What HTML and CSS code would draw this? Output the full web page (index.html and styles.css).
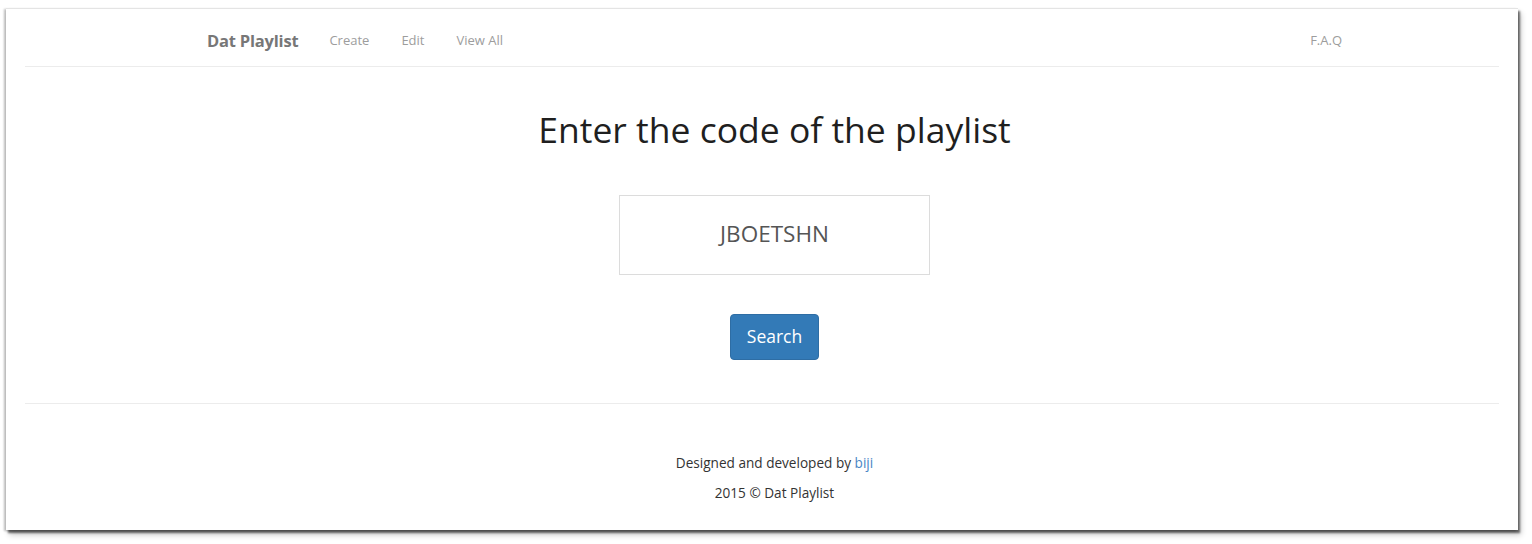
FILE: index.html
```html
<!DOCTYPE html>
<html>
<head>
<meta charset="utf-8">
<link rel="stylesheet" href="styles.css">
</head>
<body>
<div class="frame">
  <header class="navbar">
    <div class="nav-inner">
      <a class="brand">Dat Playlist</a>
      <nav class="links">
        <a>Create</a>
        <a>Edit</a>
        <a>View All</a>
      </nav>
      <nav class="links right">
        <a>F.A.Q</a>
      </nav>
    </div>
  </header>
  <main class="main">
    <h1 class="title">Enter the code of the playlist</h1>
    <div class="code-box">JBOETSHN</div>
    <button class="btn">Search</button>
  </main>
  <footer class="footer">
    <p>Designed and developed by <a class="link">biji</a></p>
    <p>2015 © Dat Playlist</p>
  </footer>
</div>
</body>
</html>
```
FILE: styles.css
```css
html, body {
  margin: 0;
  padding: 0;
  background: #ffffff;
}
body {
  font-family: "Open Sans", "Noto Sans", sans-serif;
  padding: 8px 14px 0 6px;
  height: 544px;
  box-sizing: border-box;
  overflow: hidden;
}
.frame {
  height: 522px;
  background: #fff;
  border-top: 1px solid #e4e4e4;
  box-shadow: 2px 3px 2px rgba(0,0,0,0.55), 3px 5px 6px rgba(0,0,0,0.2), -2px 1px 2px rgba(0,0,0,0.25);
  padding: 0 19px;
  box-sizing: border-box;
  display: flex;
  flex-direction: column;
}
.navbar {
  height: 58px;
  border-bottom: 1px solid #ececec;
  box-sizing: border-box;
}
.nav-inner {
  width: 1135px;
  margin-left: calc(50% - 555px);
  display: flex;
  align-items: center;
  height: 100%;
  padding-top: 5px;
  box-sizing: border-box;
}
.brand {
  font-weight: 700;
  font-size: 16.5px;
  color: #777;
  letter-spacing: -0.2px;
  margin-right: 31px;
}
.links {
  display: flex;
  gap: 32px;
}
.links a {
  font-size: 13px;
  color: #9d9d9d;
}
.links.right {
  margin-left: auto;
}
.main {
  display: flex;
  flex-direction: column;
  align-items: center;
  padding-left: 25px;
  height: 337px;
  border-bottom: 1px solid #ececec;
  box-sizing: border-box;
}
.title {
  margin: 37px 0 0;
  font-size: 35.5px;
  font-weight: 400;
  color: #1f1f1f;
  line-height: 50px;
  letter-spacing: 0;
}
.code-box {
  margin-top: 41px;
  width: 311px;
  height: 80px;
  box-sizing: border-box;
  border: 1px solid #dcdcdc;
  display: flex;
  align-items: center;
  justify-content: center;
  padding-bottom: 3px;
  font-size: 22.5px;
  color: #555;
}
.btn {
  margin-top: 39px;
  width: 89px;
  height: 46px;
  background: #337ab7;
  border: 1px solid #2e6da4;
  border-radius: 4px;
  color: #fff;
  font-family: inherit;
  font-size: 17.5px;
  padding: 0 0 3px;
}
.footer {
  padding-left: 25px;
  padding-top: 50px;
  text-align: center;
  font-size: 13.6px;
  color: #333;
}
.footer p {
  margin: 0 0 12px;
  line-height: 18px;
}
.link {
  color: #4a86c5;
}
```
